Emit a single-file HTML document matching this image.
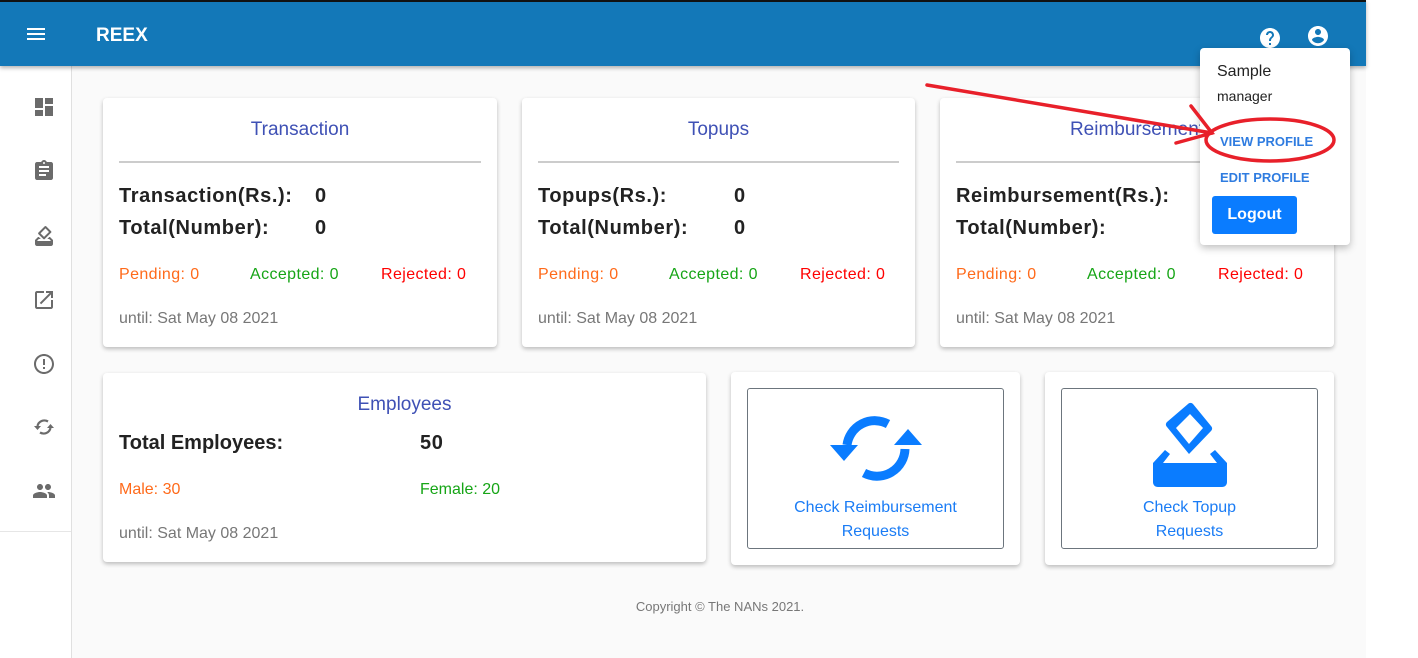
<!DOCTYPE html>
<html><head><meta charset="utf-8"><style>
*{box-sizing:border-box;margin:0;padding:0}
body{width:1418px;height:658px;background:#fff;font-family:"Liberation Sans",sans-serif;position:relative;overflow:hidden}
.app{position:absolute;left:0;top:0;width:1366px;height:658px;background:#fafafa}
.hdr{position:absolute;left:0;top:0;width:1366px;height:66px;background:#1378b8;border-top:2px solid #111;box-shadow:0 2px 4px rgba(0,0,0,.3);z-index:2}
.side{position:absolute;left:0;top:66px;width:72px;height:592px;background:#fff;border-right:1px solid #e0e0e0}
.side .ln{position:absolute;left:0;top:465px;width:71px;border-top:1px solid #e6e6e6}
.side svg{position:absolute;left:32px;width:24px;height:24px;fill:#6b6b6b}
.card{position:absolute;background:#fff;border-radius:4px;box-shadow:0 2px 4px rgba(0,0,0,.25)}
.ttl{position:absolute;left:0;right:0;text-align:center;color:#3f51b5;font-size:19px}
.hr{position:absolute;left:16px;right:16px;top:63px;border-top:2px solid #ccc}
.b{position:absolute;font-weight:bold;font-size:20px;letter-spacing:0.6px;color:#222}
.s{position:absolute;font-size:16px;letter-spacing:0.4px}
.o{color:#ff6a1a}.g{color:#16a516}.r{color:#f00}.gr{color:#777;letter-spacing:0}
.box{position:absolute;left:16px;top:16px;right:16px;bottom:16px;border:1px solid #6c757d;border-radius:3px;text-align:center;color:#1a7cf5;font-size:16px;line-height:24px}
</style></head><body>
<div class="app">
<div class="hdr">
<svg style="position:absolute;left:24px;top:20px" width="24" height="24" viewBox="0 0 24 24" fill="#fff"><path d="M3 18h18v-2H3v2zm0-5h18v-2H3v2zm0-7v2h18V6H3z"/></svg>
<div style="position:absolute;left:96px;top:23px;color:#fff;font-weight:bold;font-size:19px">REEX</div>
<svg style="position:absolute;left:1258px;top:24px" width="24" height="24" viewBox="0 0 24 24" fill="#fff"><path d="M12 2C6.48 2 2 6.48 2 12s4.48 10 10 10 10-4.48 10-10S17.52 2 12 2zm1 17h-2v-2h2v2zm2.07-7.75l-.9.92C13.45 12.9 13 13.5 13 15h-2v-.5c0-1.1.45-2.1 1.17-2.83l1.24-1.26c.37-.36.59-.86.59-1.41 0-1.1-.9-2-2-2s-2 .9-2 2H8c0-2.21 1.79-4 4-4s4 1.79 4 4c0 .88-.36 1.68-.93 2.25z"/></svg>
<svg style="position:absolute;left:1306px;top:22px" width="24" height="24" viewBox="0 0 24 24" fill="#fff"><path d="M12 2C6.48 2 2 6.48 2 12s4.48 10 10 10 10-4.48 10-10S17.52 2 12 2zm0 3c1.66 0 3 1.34 3 3s-1.34 3-3 3-3-1.34-3-3 1.34-3 3-3zm0 14.2c-2.5 0-4.71-1.28-6-3.22.03-1.99 4-3.08 6-3.08 1.99 0 5.97 1.09 6 3.08-1.29 1.94-3.5 3.22-6 3.22z"/></svg>
</div>
<div class="side">
<svg style="top:29px" viewBox="0 0 24 24"><path d="M3 13h8V3H3v10zm0 8h8v-6H3v6zm10 0h8V11h-8v10zm0-18v6h8V3h-8z"/></svg>
<svg style="top:93px" viewBox="0 0 24 24"><path d="M19 3h-4.18C14.4 1.84 13.3 1 12 1c-1.3 0-2.4.84-2.82 2H5c-1.1 0-2 .9-2 2v14c0 1.1.9 2 2 2h14c1.1 0 2-.9 2-2V5c0-1.1-.9-2-2-2zm-7 0c.55 0 1 .45 1 1s-.45 1-1 1-1-.45-1-1 .45-1 1-1zm2 14H7v-2h7v2zm3-4H7v-2h10v2zm0-4H7V7h10v2z"/></svg>
<svg style="top:158px" viewBox="0 0 24 24"><path d="M18 13h-.68l-2 2h1.91L19 17H5l1.78-2h2.05l-2-2H6l-3 3v4c0 1.1.89 2 1.99 2H19c1.1 0 2-.89 2-2v-4l-3-3zm-1-5.05l-4.95 4.95-3.54-3.54 4.95-4.95L17 7.95zm-4.24-5.66L6.39 8.66c-.39.39-.39 1.02 0 1.41l4.95 4.95c.39.39 1.02.39 1.41 0l6.36-6.360c.39-.39.39-1.02 0-1.41L14.16 2.3c-.38-.4-1.01-.4-1.4-.01z"/></svg>
<svg style="top:222px" viewBox="0 0 24 24"><path d="M19 19H5V5h7V3H5c-1.11 0-2 .9-2 2v14c0 1.1.89 2 2 2h14c1.1 0 2-.9 2-2v-7h-2v7zM14 3v2h3.59l-9.83 9.83 1.41 1.41L19 6.41V10h2V3h-7z"/></svg>
<svg style="top:286px" viewBox="0 0 24 24"><path d="M11 15h2v2h-2zm0-8h2v6h-2zm.99-5C6.47 2 2 6.48 2 12s4.47 10 9.99 10C17.52 22 22 17.52 22 12S17.52 2 11.99 2zM12 20c-4.42 0-8-3.58-8-8s3.58-8 8-8 8 3.58 8 8-3.58 8-8 8z"/></svg>
<svg style="top:349px" viewBox="0 0 24 24"><g fill="none" stroke="#6b6b6b" stroke-width="2.2"><path d="M16 6.5A7 7 0 0 0 5.5 11"/><path d="M8 17.5A7 7 0 0 0 18.5 13"/></g><path d="M2 11h7l-3.5 4zM22 13h-7l3.5-4z"/></svg>
<svg style="top:413px" viewBox="0 0 24 24"><path d="M16 11c1.66 0 2.99-1.34 2.99-3S17.66 5 16 5c-1.66 0-3 1.34-3 3s1.34 3 3 3zm-8 0c1.66 0 2.99-1.34 2.99-3S9.66 5 8 5C6.34 5 5 6.34 5 8s1.34 3 3 3zm0 2c-2.33 0-7 1.17-7 3.5V19h14v-2.5c0-2.33-4.67-3.5-7-3.5zm8 0c-.29 0-.62.02-.97.05 1.16.84 1.97 1.97 1.97 3.45V19h6v-2.5c0-2.33-4.67-3.5-7-3.5z"/></svg>
<div class="ln"></div>
</div>

<div class="card" style="left:103px;top:98px;width:394px;height:249px">
<div class="ttl" style="top:21px">Transaction</div><div class="hr"></div>
<div class="b" style="left:16px;top:87px">Transaction(Rs.):</div><div class="b" style="left:212px;top:87px">0</div>
<div class="b" style="left:16px;top:119px">Total(Number):</div><div class="b" style="left:212px;top:119px">0</div>
<div class="s o" style="left:16px;top:168px">Pending: 0</div><div class="s g" style="left:147px;top:168px">Accepted: 0</div><div class="s r" style="left:278px;top:168px">Rejected: 0</div>
<div class="s gr" style="left:16px;top:212px">until: Sat May 08 2021</div>
</div>
<div class="card" style="left:522px;top:98px;width:393px;height:249px">
<div class="ttl" style="top:21px">Topups</div><div class="hr"></div>
<div class="b" style="left:16px;top:87px">Topups(Rs.):</div><div class="b" style="left:212px;top:87px">0</div>
<div class="b" style="left:16px;top:119px">Total(Number):</div><div class="b" style="left:212px;top:119px">0</div>
<div class="s o" style="left:16px;top:168px">Pending: 0</div><div class="s g" style="left:147px;top:168px">Accepted: 0</div><div class="s r" style="left:278px;top:168px">Rejected: 0</div>
<div class="s gr" style="left:16px;top:212px">until: Sat May 08 2021</div>
</div>
<div class="card" style="left:940px;top:98px;width:394px;height:249px">
<div class="ttl" style="top:21px">Reimbursement</div><div class="hr"></div>
<div class="b" style="left:16px;top:87px">Reimbursement(Rs.):</div><div class="b" style="left:280px;top:87px">0</div>
<div class="b" style="left:16px;top:119px">Total(Number):</div><div class="b" style="left:280px;top:119px">0</div>
<div class="s o" style="left:16px;top:168px">Pending: 0</div><div class="s g" style="left:147px;top:168px">Accepted: 0</div><div class="s r" style="left:278px;top:168px">Rejected: 0</div>
<div class="s gr" style="left:16px;top:212px">until: Sat May 08 2021</div>
</div>

<div class="card" style="left:103px;top:373px;width:603px;height:189px">
<div class="ttl" style="top:21px">Employees</div>
<div class="b" style="left:16px;top:59px;letter-spacing:0">Total Employees:</div><div class="b" style="left:317px;top:59px">50</div>
<div class="s o" style="left:16px;top:108px;letter-spacing:0">Male: 30</div><div class="s g" style="left:317px;top:108px;letter-spacing:0">Female: 20</div>
<div class="s gr" style="left:16px;top:152px">until: Sat May 08 2021</div>
</div>

<div class="card" style="left:731px;top:372px;width:289px;height:193px"><div class="box">
<svg style="margin-top:22px" width="92" height="72" viewBox="0 0 92 72"><g fill="none" stroke="#0a7cff" stroke-width="9"><path d="M58 13 A28 28 0 0 0 17 34"/><path d="M34 62 A28 28 0 0 0 75 38"/></g><path fill="#0a7cff" d="M0 34h28L14 50zM92 34H64L78 18z"/></svg>
<div style="margin-top:5px">Check Reimbursement<br>Requests</div></div></div>
<div class="card" style="left:1045px;top:372px;width:289px;height:193px"><div class="box">
<svg style="margin-top:13px" width="80" height="86" viewBox="0 0 80 86"><g fill="#0a7cff"><path d="M38 2c1.5-1.5 3.5-1.5 5 0l18 22c1.5 1.5 1.5 3.5 0 5L39 52 17 25c-1.5-1.5-1.5-3.5 0-5zM40 12 26 26l13 16 14-16z"/><path d="M15 48 3 61v19c0 3 2 5 5 5h64c3 0 5-2 5-5V61L65 48l-5 4 7 9H13l7-9z"/></g></svg>
<div style="margin-top:0px">Check Topup<br>Requests</div></div></div>

<div style="position:absolute;left:0;width:1440px;top:599px;text-align:center;font-size:13px;color:#777">Copyright © The NANs 2021.</div>
</div>

<div class="card" style="left:1200px;top:48px;width:150px;height:197px;z-index:3;box-shadow:0 3px 8px rgba(0,0,0,.25)">
<div style="position:absolute;left:17px;top:15px;font-size:16px;color:#222">Sample</div>
<div style="position:absolute;left:17px;top:40px;font-size:14px;color:#222">manager</div>
<div style="position:absolute;left:20px;top:86px;font-size:13px;font-weight:bold;color:#2f7ce0">VIEW PROFILE</div>
<div style="position:absolute;left:20px;top:122px;font-size:13px;font-weight:bold;color:#2f7ce0">EDIT PROFILE</div>
<div style="position:absolute;left:12px;top:148px;width:85px;height:38px;background:#0a7cff;border-radius:3px;color:#fff;font-weight:bold;font-size:16px;line-height:38px;text-align:center">Logout</div>
</div>
<svg style="position:absolute;left:0;top:0;z-index:4" width="1418" height="658"><g fill="none" stroke="#e8202a" stroke-width="3.5" stroke-linecap="round"><path d="M927 85 L1212 133"/><path d="M1191 106 L1212 133 L1176 143"/><ellipse cx="1270" cy="140" rx="64" ry="21"/></g></svg>
</body></html>
